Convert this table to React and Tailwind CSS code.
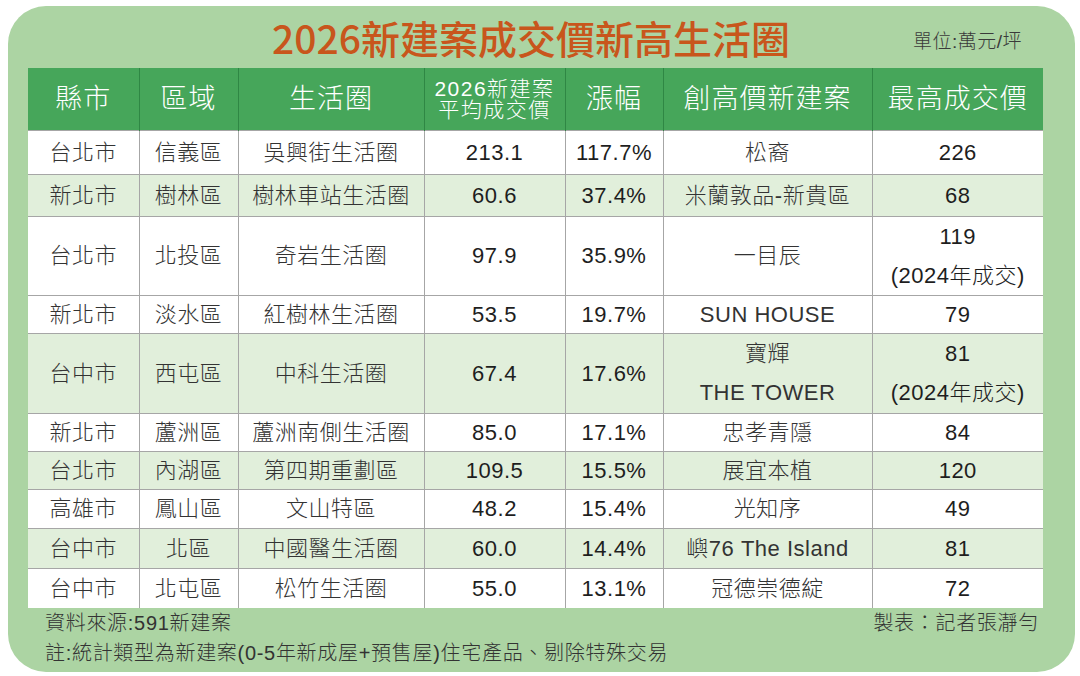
import React from 'react'

const COLS = [111, 99, 186, 141, 98, 209, 171]

const HEAD = ['縣市', '區域', '生活圈', ['2026新建案', '平均成交價'], '漲幅', '創高價新建案', '最高成交價']

// [縣市, 區域, 生活圈, 均價, 漲幅, 建案, 最高價, 高度, 底色]
const ROWS = [
  ['台北市', '信義區', '吳興街生活圈', '213.1', '117.7%', '松裔', '226', 44, false],
  ['新北市', '樹林區', '樹林車站生活圈', '60.6', '37.4%', '米蘭敦品-新貴區', '68', 42, true],
  ['台北市', '北投區', '奇岩生活圈', '97.9', '35.9%', '一目辰', ['119', '(2024年成交)'], 78, false],
  ['新北市', '淡水區', '紅樹林生活圈', '53.5', '19.7%', 'SUN HOUSE', '79', 38, false],
  ['台中市', '西屯區', '中科生活圈', '67.4', '17.6%', ['寶輝', 'THE TOWER'], ['81', '(2024年成交)'], 80, true],
  ['新北市', '蘆洲區', '蘆洲南側生活圈', '85.0', '17.1%', '忠孝青隱', '84', 38, false],
  ['台北市', '內湖區', '第四期重劃區', '109.5', '15.5%', '展宜本植', '120', 38, true],
  ['高雄市', '鳳山區', '文山特區', '48.2', '15.4%', '光知序', '49', 39, false],
  ['台中市', '北區', '中國醫生活圈', '60.0', '14.4%', '嶼76 The Island', '81', 40, true],
  ['台中市', '北屯區', '松竹生活圈', '55.0', '13.1%', '冠德崇德綻', '72', 40, false],
]

const Lines = ({ v, lh }) =>
  Array.isArray(v)
    ? v.map((t, i) => <div key={i} className={lh}>{t}</div>)
    : <div>{v}</div>

export default function App() {
  return (
    <div className="w-[1080px] h-[676px] bg-white pt-[6px] pl-[8px] font-['Liberation_Sans','Noto_Sans_CJK_TC',sans-serif]">
      <div className="w-[1067px] h-[666px] rounded-[38px] bg-[#acd4a3] pl-[20px]">
        <div className="w-[1015px] h-[62px] flex items-center">
          <div className="ml-[244px] text-[39px] leading-none font-medium text-[#c8561c] font-['Noto_Sans_CJK_TC',sans-serif]">
            2026新建案成交價新高生活圈
          </div>
          <div className="ml-auto mr-[21px] mt-[10px] text-[19px] font-light tracking-[0.5px] text-[#3a3a3a]">單位:萬元/坪</div>
        </div>

        <table className="table-fixed border-collapse w-[1015px] text-center">
          <colgroup>
            {COLS.map((w, i) => <col key={i} style={{ width: w }} />)}
          </colgroup>
          <thead>
            <tr className="h-[62px] bg-[#46a65a] text-white">
              {HEAD.map((h, i) => (
                <th key={i} className={`font-light p-0 ${i > 0 ? 'border-l border-[#2f8744]' : ''} ${Array.isArray(h) ? 'text-[21px] tracking-[1.5px]' : 'text-[27px] tracking-[1px]'}`}>
                  <Lines v={h} lh="leading-[21px]" />
                </th>
              ))}
            </tr>
          </thead>
          <tbody>
            {ROWS.map((r, ri) => (
              <tr key={ri} style={{ height: r[7] }} className={r[8] ? 'bg-[#e1efdb]' : 'bg-white'}>
                {r.slice(0, 7).map((c, ci) => (
                  <td key={ci} className={`p-0 text-[22px] font-light tracking-[0.5px] border-t border-[#a6a6a6] ${ci > 0 ? 'border-l' : ''} ${ci >= 3 && ci !== 5 ? 'text-[#1e1e1e]' : 'text-[#333333]'}`}>
                    <Lines v={c} lh="leading-[39px]" />
                  </td>
                ))}
              </tr>
            ))}
          </tbody>
        </table>

        <div className="w-[1015px] pl-[17px] pr-[4px] text-[20px] font-light tracking-[0.7px] text-[#333333]">
          <div className="flex justify-between leading-[30px]">
            <span>資料來源:591新建案</span>
            <span>製表：記者張瀞勻</span>
          </div>
          <div className="leading-[30px]">註:統計類型為新建案(0-5年新成屋+預售屋)住宅產品、剔除特殊交易</div>
        </div>
      </div>
    </div>
  )
}
